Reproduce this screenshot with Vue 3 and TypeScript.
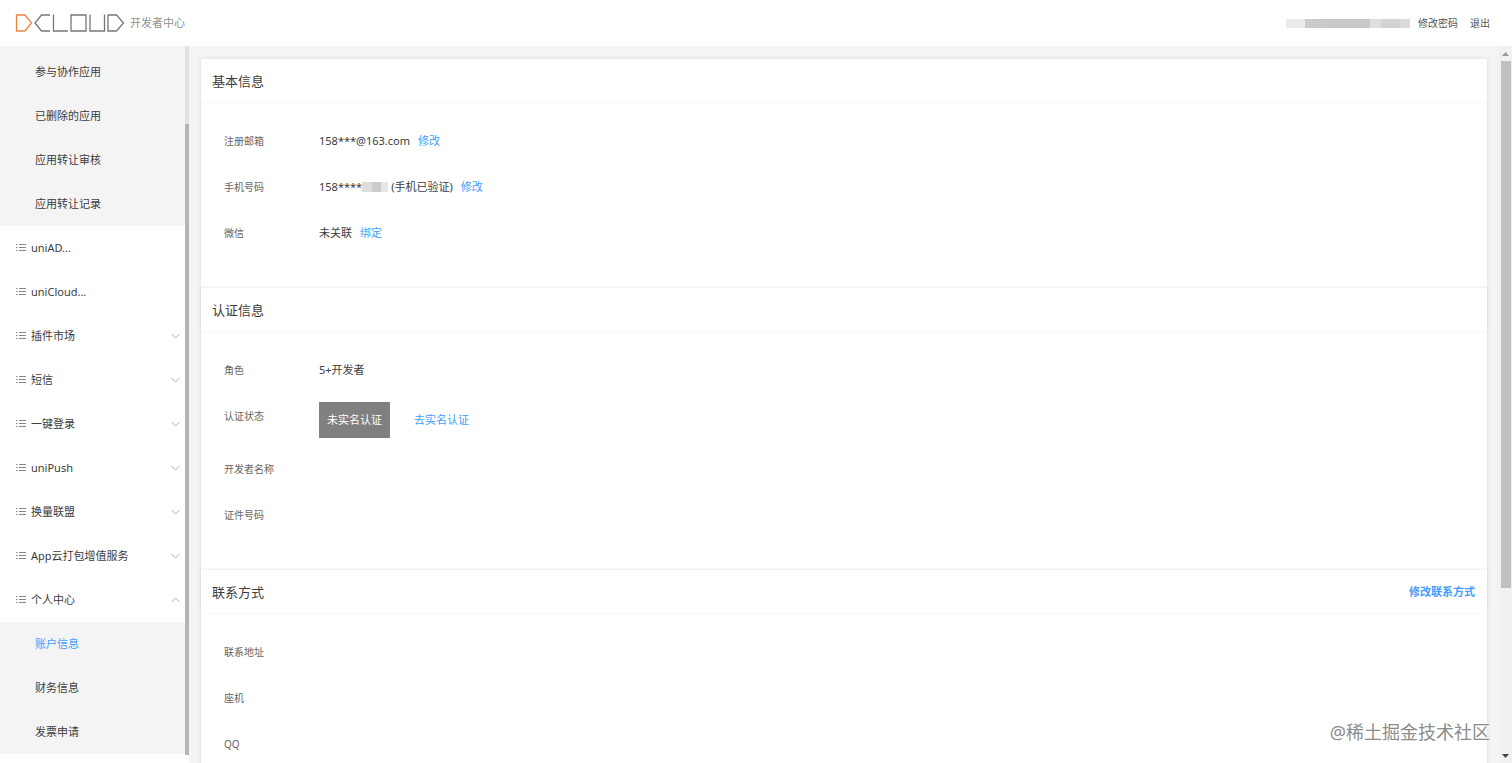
<script setup lang="ts">
import { ref } from 'vue'

interface MenuItem {
  label: string
  arrow?: 'down' | 'up'
}
interface Field {
  label: string
  value?: string
  masked?: boolean
  suffix?: string
  link?: string
  status?: string
}
interface Section {
  title: string
  action?: string
  fields: Field[]
}

const appMenu = ['参与协作应用', '已删除的应用', '应用转让审核', '应用转让记录']
const mainMenu: MenuItem[] = [
  { label: 'uniAD...' },
  { label: 'uniCloud...' },
  { label: '插件市场', arrow: 'down' },
  { label: '短信', arrow: 'down' },
  { label: '一键登录', arrow: 'down' },
  { label: 'uniPush', arrow: 'down' },
  { label: '换量联盟', arrow: 'down' },
  { label: 'App云打包增值服务', arrow: 'down' },
  { label: '个人中心', arrow: 'up' },
]
const personalMenu = ['账户信息', '财务信息', '发票申请']
const active = ref('账户信息')

const sections: Section[] = [
  {
    title: '基本信息',
    fields: [
      { label: '注册邮箱', value: '158***@163.com', link: '修改' },
      { label: '手机号码', value: '158****', masked: true, suffix: '(手机已验证)', link: '修改' },
      { label: '微信', value: '未关联', link: '绑定' },
    ],
  },
  {
    title: '认证信息',
    fields: [
      { label: '角色', value: '5+开发者' },
      { label: '认证状态', status: '未实名认证', link: '去实名认证' },
      { label: '开发者名称' },
      { label: '证件号码' },
    ],
  },
  {
    title: '联系方式',
    action: '修改联系方式',
    fields: [{ label: '联系地址' }, { label: '座机' }, { label: 'QQ' }],
  },
]
</script>

<template>
  <div class="page">
    <header class="topbar">
      <a class="brand" href="#" aria-label="DCloud">
        <svg class="logo" width="110" height="18" viewBox="0 0 110 18" fill="none" stroke-width="1.3">
          <path d="M1.5 1H10L16.5 9L10 17H1.5Z" stroke="#ee8544" />
          <g stroke="#777">
            <path d="M35 1H26.500L20 9L26.500 17H35" />
            <path d="M38.500 .5V17H53" />
            <path d="M56 1H71V17H56Z" />
            <path d="M75 .5V17H89.500V.5" />
            <path d="M93 1H101.500L108.500 9L101.500 17H93Z" />
          </g>
        </svg>
      </a>
      <span class="brand-name">开发者中心</span>
      <span class="spacer"></span>
      <span class="mask account"></span>
      <a class="toplink" href="#">修改密码</a>
      <a class="toplink" href="#">退出</a>
    </header>

    <div class="body">
      <aside class="sidebar">
        <nav class="menu">
          <ul class="sub first">
            <li v-for="item in appMenu" :key="item"><a href="#">{{ item }}</a></li>
          </ul>
          <ul>
            <li v-for="item in mainMenu" :key="item.label">
              <a href="#">
                <svg class="list-icon" width="10" height="8" viewBox="0 0 10 8" stroke="#888" stroke-width="1">
                  <path d="M0 .5H1.500M0 3.500H1.500M0 6.500H1.500M3 .5H10M3 3.500H10M3 6.500H10" />
                </svg>
                <span>{{ item.label }}</span>
                <svg v-if="item.arrow" class="arrow" :class="item.arrow" width="9" height="6" viewBox="0 0 9 6" fill="none" stroke="#aaa">
                  <path d="M.5 1L4.500 5L8.500 1" />
                </svg>
              </a>
            </li>
          </ul>
          <ul class="sub">
            <li v-for="item in personalMenu" :key="item">
              <a href="#" :class="{ active: active === item }" @click.prevent="active = item">{{ item }}</a>
            </li>
          </ul>
        </nav>
        <div class="side-track"><div class="side-thumb"></div></div>
      </aside>

      <main class="content">
        <div class="card">
          <section v-for="section in sections" :key="section.title">
            <div class="section-head">
              <h2>{{ section.title }}</h2>
              <a v-if="section.action" class="link strong" href="#">{{ section.action }}</a>
            </div>
            <dl>
              <div v-for="field in section.fields" :key="field.label" class="field">
                <dt>{{ field.label }}</dt>
                <dd :class="{ tall: field.status }">
                  <span v-if="field.status" class="status">{{ field.status }}</span>
                  <span v-if="field.value">{{ field.value }}</span>
                  <span v-if="field.masked" class="mask phone"></span>
                  <span v-if="field.suffix" class="suffix">{{ field.suffix }}</span>
                  <a v-if="field.link" class="link" href="#">{{ field.link }}</a>
                </dd>
              </div>
            </dl>
          </section>
        </div>
      </main>

      <div class="scrollbar">
        <svg width="7" height="4" viewBox="0 0 7 4"><path d="M0 4L3.500 0L7 4Z" fill="#999" /></svg>
        <div class="scroll-track"><div class="scroll-thumb"></div></div>
        <svg width="7" height="4" viewBox="0 0 7 4"><path d="M0 0L3.500 4L7 0Z" fill="#444" /></svg>
      </div>
    </div>
    <div class="watermark">@稀土掘金技术社区</div>
  </div>
</template>

<style>
body {
  margin: 0;
  overflow: hidden;
}
</style>

<style scoped>
.page {
  position: relative;
  display: flex;
  flex-direction: column;
  height: 100vh;
  overflow: hidden;
  background: #f4f4f4;
  color: #3c3c3c;
  font: 11px/16px "Noto Sans", "Noto Sans CJK SC", sans-serif;
}
a {
  color: inherit;
  text-decoration: none;
}
ul,
dl,
dd,
h2 {
  margin: 0;
  padding: 0;
  list-style: none;
}
.topbar {
  display: flex;
  align-items: center;
  flex: none;
  height: 46px;
  box-sizing: border-box;
  padding: 0 22px 0 15px;
  background: #fff;
}
.brand,
.logo {
  display: block;
}
.brand-name {
  margin-left: 5px;
  color: #909090;
}
.spacer {
  flex: 1;
}
.toplink {
  margin-left: 12px;
  color: #555;
  font-size: 10px;
}
.mask {
  display: block;
}
.account {
  width: 124px;
  height: 9px;
  margin-right: -4px;
  background: linear-gradient(90deg, #ebebeb 0 19px, #cbcbcb 19px 40px, #c8c8c8 40px 84px, #dedede 84px 95px, #d2d2d2 95px 114px, #dadada 114px);
}
.body {
  display: flex;
  flex: 1;
  min-height: 0;
}
.sidebar {
  display: flex;
  flex: none;
  width: 189px;
  background: #fff;
}
.menu {
  flex: 1;
}
.sub {
  background: #f4f4f4;
}
.first {
  padding-top: 4px;
}
.menu a {
  display: flex;
  align-items: center;
  height: 44px;
  box-sizing: border-box;
  padding: 0 5px 0 16px;
}
.menu .sub a {
  padding-left: 35px;
}
.menu .active {
  color: #409eff;
}
.list-icon {
  margin-right: 5px;
}
.arrow {
  margin-left: auto;
}
.up {
  transform: rotate(180deg);
}
.side-track {
  width: 4px;
  margin-bottom: 8px;
  padding-top: 78px;
  box-sizing: border-box;
  background: #e2e2e2;
}
.side-thumb {
  height: 100%;
  background: #b5b5b5;
}
.content {
  flex: 1;
  min-width: 0;
  padding: 13px 12px 0;
  overflow: hidden;
}
.card {
  border-radius: 3px;
  background: #fff;
  box-shadow: 0 0 5px rgba(0, 0, 0, 0.1);
}
.section-head {
  display: flex;
  align-items: center;
  justify-content: space-between;
  height: 44px;
  box-sizing: border-box;
  padding: 0 12px 0 11px;
  border-bottom: 1px solid #f8f8f8;
}
section + section .section-head {
  box-shadow: 0 -1px 2px rgba(0, 0, 0, 0.08);
}
h2 {
  font-size: 13px;
  font-weight: 400;
}
dl {
  padding: 15px 23px 32px;
}
.field {
  display: flex;
}
dt {
  flex: none;
  width: 95px;
  color: #666;
  font-size: 10px;
  line-height: 46px;
}
dd {
  display: flex;
  align-items: center;
  height: 46px;
}
.tall {
  height: 53px;
}
.link {
  margin-left: 8px;
  color: #409eff;
}
.strong {
  font-weight: 700;
}
.status {
  padding: 0 8px;
  background: #808080;
  color: #fff;
  line-height: 36px;
}
.status ~ .link {
  margin-left: 24px;
}
.phone {
  width: 26px;
  height: 10px;
  background: linear-gradient(90deg, #ddd 0 10px, #cbcbcb 10px 19px, #e6e6e6 19px);
}
.suffix {
  margin-left: 3px;
}
.scrollbar {
  display: flex;
  flex: none;
  flex-direction: column;
  align-items: center;
  width: 13px;
  padding: 6px 0 5px;
  box-sizing: border-box;
  background: #f1f1f1;
}
.scroll-track {
  flex: 1;
  width: 10px;
  padding-top: 5px;
}
.scroll-thumb {
  height: 76%;
  background: #c1c1c1;
}
.watermark {
  position: absolute;
  right: 22px;
  bottom: 18px;
  color: #8c8c8c;
  font-size: 18px;
  line-height: 26px;
  text-shadow: -1px -1px 0 #fff;
}
</style>
